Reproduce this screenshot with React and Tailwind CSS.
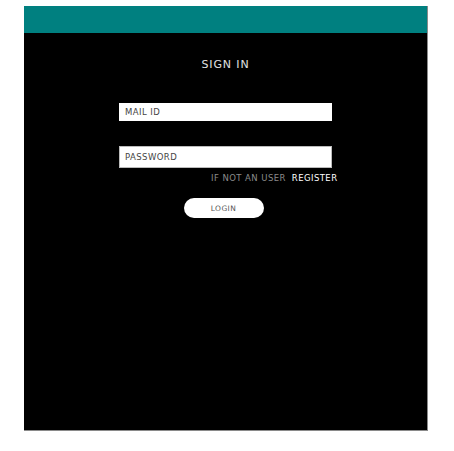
import React from 'react';

export default function App() {
  return (
    <div className="min-h-[451px] w-[454px] bg-white pt-[6px] font-['DejaVu_Sans',sans-serif]">
      <div className="ml-[24px] flex h-[425px] w-[404px] flex-col border-r border-b border-[#8a8a8a] bg-black">
        <div className="h-[27px] bg-[#008080]" />
        <div className="flex flex-col items-center">
          <h1 className="mt-[24px] text-[11px] tracking-[0.08em] text-[#e0e0e0]">SIGN IN</h1>

          <div className="mt-[29px] flex h-[18px] w-[213px] items-center bg-white pt-[1px] pl-[6px] text-[8.5px] tracking-[0.05em] text-[#444]">
            MAIL ID
          </div>

          <div className="mt-[25px] flex h-[22px] w-[213px] items-center border border-[#bbb] bg-white pt-[1px] pl-[5px] text-[8.5px] tracking-[0.05em] text-[#444]">
            PASSWORD
          </div>

          <div className="mt-[4px] flex w-[224px] justify-end gap-[6px] text-[8.5px] tracking-[0.05em]">
            <span className="text-[#8a8a8a]">IF NOT AN USER</span>
            <span className="text-white">REGISTER</span>
          </div>

          <button className="mt-[14px] mr-[4px] flex h-[20px] w-[80px] items-center justify-center rounded-full bg-white text-[7.5px] tracking-[0.05em] text-[#555]">
            LOGIN
          </button>
        </div>
      </div>
    </div>
  );
}
